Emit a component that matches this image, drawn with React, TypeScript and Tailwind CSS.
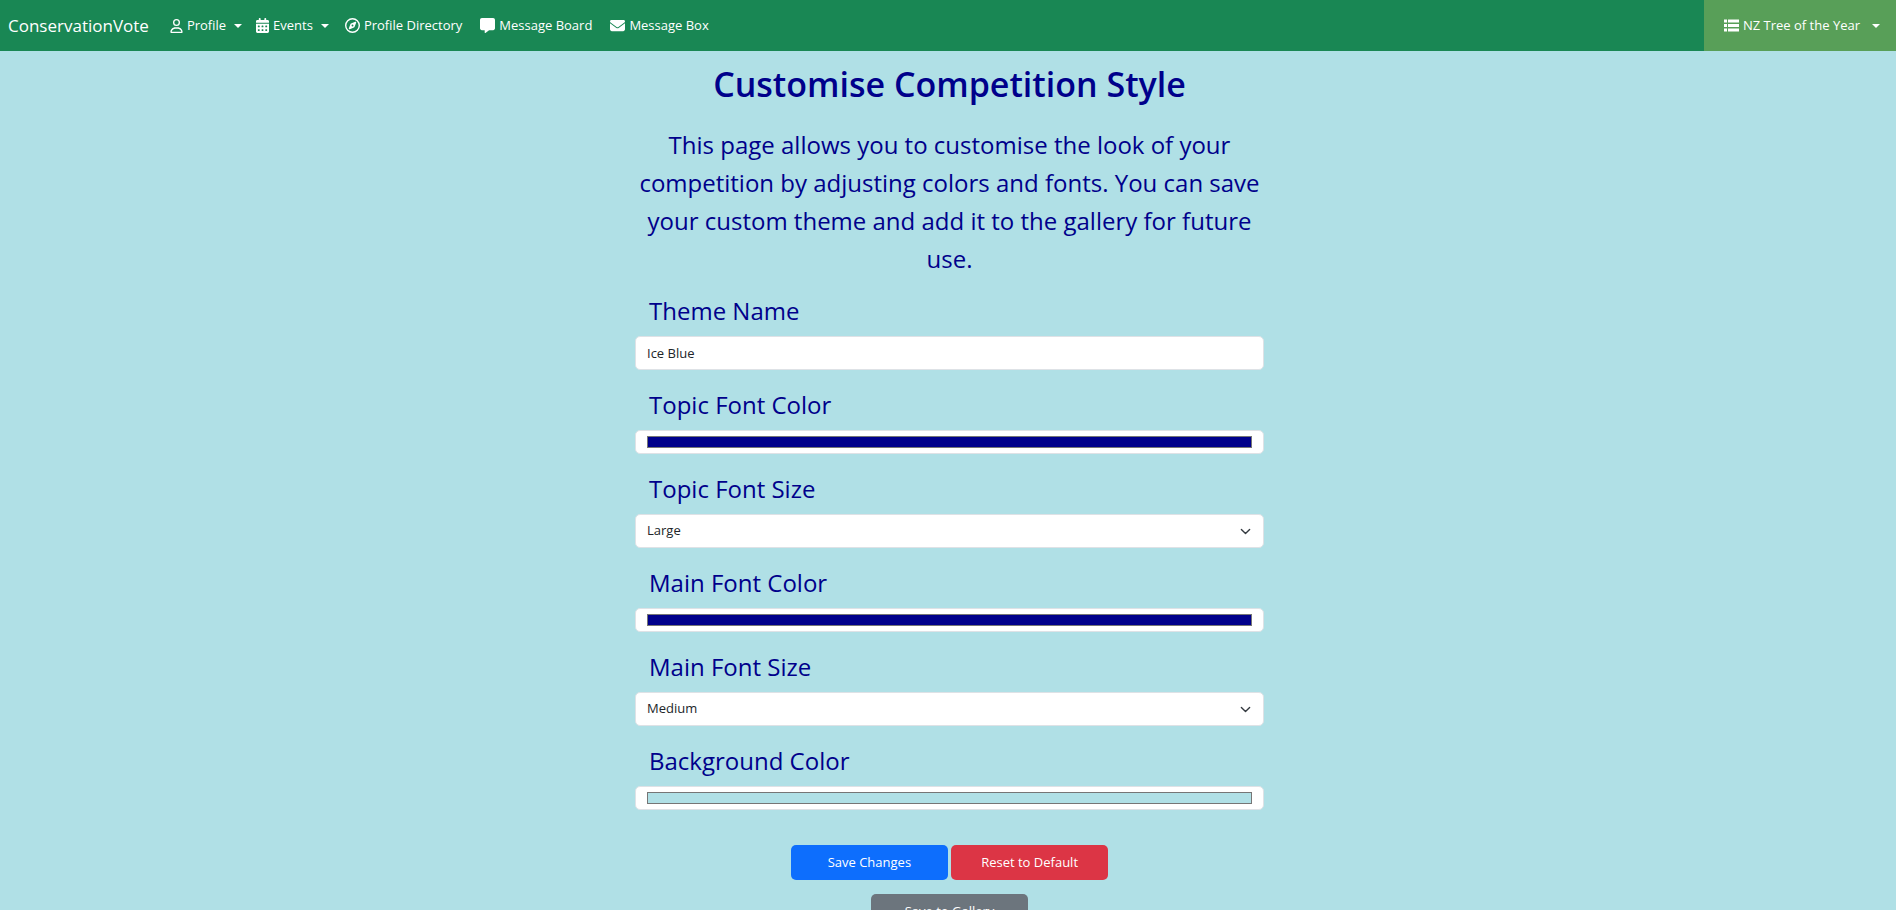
import { useState } from "react";
import type { ReactNode } from "react";
import { FaCalendarDays, FaEnvelope, FaMessage, FaRegCompass, FaRegUser } from "react-icons/fa6";

function Caret() {
  return <span aria-hidden="true" className="ml-1 size-0 border-x-4 border-t-4 border-x-transparent border-t-current" />;
}

function ListIcon() {
  return (
    <svg aria-hidden="true" viewBox="0 0 15 13" className="h-[13px] w-[15px]" fill="currentColor">
      <path d="M0 .5h3v3H0zM4 .5h11v3H4zM0 5h3v3H0zM4 5h11v3H4zM0 9.5h3v3H0zM4 9.5h11v3H4z" />
    </svg>
  );
}

type NavItem = { label: string; icon: ReactNode; menu?: boolean };

const navItems: NavItem[] = [
  { label: "Profile", icon: <FaRegUser className="h-3.5 w-[13px]" />, menu: true },
  { label: "Events", icon: <FaCalendarDays className="h-[15px] w-[13px]" />, menu: true },
  { label: "Profile Directory", icon: <FaRegCompass className="size-[15px]" /> },
  { label: "Message Board", icon: <FaMessage className="size-[15px]" /> },
  { label: "Message Box", icon: <FaEnvelope className="size-[15px]" /> },
];

function Navbar() {
  return (
    <nav className="flex h-[51px] items-stretch bg-[#198754] text-[13px] text-white">
      <a href="#" className="mr-3.5 flex items-center pl-2 text-[17px]">ConservationVote</a>
      {navItems.map((item) =>
        item.menu ? (
          <button key={item.label} type="button" className="flex items-center gap-1 px-[7px]">
            {item.icon}
            <span>{item.label}</span>
            <Caret />
          </button>
        ) : (
          <a key={item.label} href="#" className="flex items-center gap-1 px-[9px]">
            {item.icon}
            <span>{item.label}</span>
          </a>
        ),
      )}
      <button type="button" className="ml-auto flex items-center gap-1 bg-[#589f58] pr-4 pl-5">
        <ListIcon />
        <span className="pr-1">NZ Tree of the Year</span>
        <Caret />
      </button>
    </nav>
  );
}

function Field({ id, label, children }: { id: string; label: string; children: ReactNode }) {
  return (
    <div className="mb-4">
      <label htmlFor={id} className="mb-1.5 block px-3.5 text-2xl/[38px]">{label}</label>
      {children}
    </div>
  );
}

function ColorInput({ id, value, onChange }: { id: string; value: string; onChange: (v: string) => void }) {
  return (
    <input
      id={id}
      type="color"
      value={value}
      onChange={(e) => onChange(e.target.value)}
      className="block h-6 w-full rounded-[5px] border border-[#dee2e6] bg-white px-[11px] py-[5px] [&::-webkit-color-swatch]:rounded-none [&::-webkit-color-swatch]:border [&::-webkit-color-swatch]:border-[#767676] [&::-webkit-color-swatch-wrapper]:p-0"
    />
  );
}

function SizeSelect({ id, initial }: { id: string; initial: string }) {
  return (
    <div className="grid items-center">
      <select
        id={id}
        defaultValue={initial}
        className="col-start-1 row-start-1 h-[34px] w-full appearance-none rounded-[5px] border border-[#dee2e6] bg-white px-[11px] text-[13px] text-[#212529]"
      >
        <option>Small</option>
        <option>Medium</option>
        <option>Large</option>
      </select>
      <svg
        aria-hidden="true"
        viewBox="0 0 16 16"
        className="pointer-events-none col-start-1 row-start-1 mr-[13px] size-[11px] justify-self-end"
      >
        <path d="m2 5 6 6 6-6" fill="none" stroke="#343a40" strokeWidth="2" strokeLinecap="round" strokeLinejoin="round" />
      </svg>
    </div>
  );
}

const buttonClass = "h-[35px] w-1/4 rounded-[5px] text-[13px] text-white";

export default function App() {
  const [name, setName] = useState("Ice Blue");
  const [topic, setTopic] = useState("#00008b");
  const [main, setMain] = useState("#00008b");
  const [background, setBackground] = useState("#b0e0e6");

  return (
    <div className="min-h-screen bg-[#b0e0e6] font-['Open_Sans','Noto_Sans',sans-serif] text-[#00008b]">
      <Navbar />
      <main className="mx-auto w-1/3 pt-3 pb-3.5 pl-[3px]">
        <h1 className="mb-[21px] text-center text-[34px]/[42px] font-semibold">Customise Competition Style</h1>
        <p className="mb-3.5 text-center text-2xl/[38px]">
          This page allows you to customise the look of your competition by adjusting colors and fonts. You can save
          your custom theme and add it to the gallery for future use.
        </p>
        <form onSubmit={(e) => e.preventDefault()}>
          <Field id="theme-name" label="Theme Name">
            <input
              id="theme-name"
              type="text"
              value={name}
              onChange={(e) => setName(e.target.value)}
              className="block h-[34px] w-full rounded-[5px] border border-[#dee2e6] bg-white px-[11px] text-[13px] text-[#212529]"
            />
          </Field>
          <Field id="topic-color" label="Topic Font Color">
            <ColorInput id="topic-color" value={topic} onChange={setTopic} />
          </Field>
          <Field id="topic-size" label="Topic Font Size">
            <SizeSelect id="topic-size" initial="Large" />
          </Field>
          <Field id="main-color" label="Main Font Color">
            <ColorInput id="main-color" value={main} onChange={setMain} />
          </Field>
          <Field id="main-size" label="Main Font Size">
            <SizeSelect id="main-size" initial="Medium" />
          </Field>
          <Field id="background-color" label="Background Color">
            <ColorInput id="background-color" value={background} onChange={setBackground} />
          </Field>
          <div className="flex flex-wrap justify-center gap-x-[3px] gap-y-3.5 pt-[19px]">
            <button type="submit" className={`${buttonClass} bg-[#0d6efd]`}>Save Changes</button>
            <button type="button" className={`${buttonClass} bg-[#dc3545]`}>Reset to Default</button>
            <div className="flex w-full justify-center">
              <button type="button" className={`${buttonClass} bg-[#6c757d]`}>Save to Gallery</button>
            </div>
          </div>
        </form>
      </main>
    </div>
  );
}
